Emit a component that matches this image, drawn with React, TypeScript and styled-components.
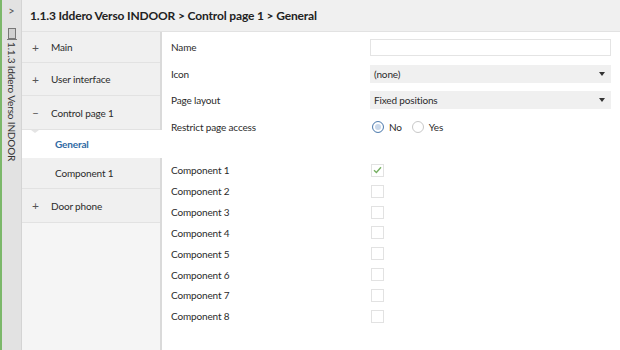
import styled, { createGlobalStyle } from "styled-components";

const GlobalStyle = createGlobalStyle`
  html, body {
    margin: 0;
    padding: 0;
    background: #ffffff;
  }
  body {
    font-family: Lato, "Open Sans", sans-serif;
    color: #2b2b2b;
  }
`;

const Window = styled.div`
  width: 620px;
  height: 350px;
  display: flex;
  overflow: hidden;
`;

const Rail = styled.div`
  width: 19px;
  border-left: 2px solid #7cb86a;
  border-right: 1px solid #d4d4d4;
  background-color: #e2e2e2;
  display: flex;
  flex-direction: column;
  align-items: center;
  padding-top: 4px;
`;

const Chevron = styled.div`
  font-size: 11px;
  color: #555;
  height: 22px;
  line-height: 14px;
`;

const RailLabel = styled.div`
  writing-mode: vertical-rl;
  font-size: 10px;
  letter-spacing: -0.15px;
  color: #333;
  display: flex;
  align-items: center;
  gap: 2px;
  margin-top: 2px;
`;

const Main = styled.div`
  flex: 1;
  display: flex;
  flex-direction: column;
`;

const Header = styled.div`
  height: 32px;
  box-sizing: border-box;
  background-color: #f0f0f0;
  border-bottom: 1px solid #e2e2e2;
  display: flex;
  align-items: center;
  padding-left: 8px;
  font-size: 12px;
  letter-spacing: -0.15px;
  font-weight: 700;
  color: #222;
`;

const Body = styled.div`
  flex: 1;
  display: flex;
`;

const Nav = styled.div`
  width: 138px;
  background-color: #f5f5f5;
  border-right: 2px solid #dadada;
  display: flex;
  flex-direction: column;
`;

const NavItem = styled.div<{ $height: number; $sub?: boolean; $active?: boolean }>`
  height: ${(p) => p.$height}px;
  box-sizing: border-box;
  display: flex;
  align-items: center;
  padding-left: ${(p) => (p.$sub ? 33 : 10)}px;
  font-size: 10px;
  letter-spacing: -0.15px;
  position: relative;
  background-color: ${(p) => (p.$active ? "#ffffff" : "#f0f0f0")};
  color: ${(p) => (p.$active ? "#2f6aa3" : "#2b2b2b")};
  font-weight: ${(p) => (p.$active ? 700 : 400)};
  border-bottom: ${(p) => (p.$sub ? "none" : "1px solid #e2e2e2")};
  margin-right: ${(p) => (p.$active ? "-2px" : "0")};
`;

const Sign = styled.span`
  width: 19px;
  font-size: 12px;
  color: #555;
`;

const Notch = styled.span`
  position: absolute;
  top: 0;
  left: 9px;
  width: 0;
  height: 0;
  border-left: 4px solid transparent;
  border-right: 4px solid transparent;
  border-top: 3px solid #e4e4e4;
`;

const Content = styled.div`
  flex: 1;
  background-color: #ffffff;
  padding: 2px 9px 0 9px;
  font-size: 10px;
  letter-spacing: -0.15px;
`;

const Form = styled.div`
  display: grid;
  grid-template-columns: 199px 241px;
  grid-auto-rows: 26.5px;
  align-items: center;
`;

const Label = styled.div`
  color: #2b2b2b;
`;

const TextBox = styled.div`
  height: 17px;
  box-sizing: border-box;
  border: 1px solid #e4e4e4;
  background-color: #fff;
`;

const Select = styled.div`
  height: 18px;
  box-sizing: border-box;
  background-color: #f0f0f0;
  display: flex;
  align-items: center;
  justify-content: space-between;
  padding: 0 6px 0 4px;
  color: #2b2b2b;
`;

const Arrow = styled.span`
  width: 0;
  height: 0;
  border-left: 3.5px solid transparent;
  border-right: 3.5px solid transparent;
  border-top: 4px solid #333;
`;

const RadioGroup = styled.div`
  display: flex;
  align-items: center;
  padding-left: 2px;
`;

const Radio = styled.span<{ $checked?: boolean }>`
  width: 12px;
  height: 12px;
  box-sizing: border-box;
  border-radius: 50%;
  border: 1px solid ${(p) => (p.$checked ? "#5580b0" : "#c8c8c8")};
  background-color: ${(p) => (p.$checked ? "#c9d8ea" : "#fff")};
  box-shadow: ${(p) => (p.$checked ? "inset 0 0 0 2px #fff" : "none")};
  margin-right: 5px;
`;

const RadioText = styled.span`
  margin-right: 10px;
`;

const Components = styled.div`
  display: grid;
  grid-template-columns: 199px 20px;
  grid-auto-rows: 20.85px;
  align-items: center;
  margin-top: 20px;
`;

const Check = styled.span`
  width: 13px;
  height: 13px;
  box-sizing: border-box;
  border: 1px solid #e2e2e2;
  display: flex;
  align-items: center;
  justify-content: center;
  margin-left: 1px;
`;

const components = [1, 2, 3, 4, 5, 6, 7, 8];

function App() {
  return (
    <>
      <GlobalStyle />
      <Window>
        <Rail>
          <Chevron>&gt;</Chevron>
          <RailLabel>
            <svg width="10" height="12" viewBox="0 0 10 12">
              <rect x="1.5" y="0.5" width="7" height="10" fill="#d0d0d0" stroke="#777" />
              <line x1="0" y1="11.5" x2="10" y2="11.5" stroke="#777" />
            </svg>
            1.1.3 Iddero Verso INDOOR
          </RailLabel>
        </Rail>
        <Main>
          <Header>1.1.3 Iddero Verso INDOOR &gt; Control page 1 &gt; General</Header>
          <Body>
            <Nav>
              <NavItem $height={31}>
                <Sign>+</Sign>Main
              </NavItem>
              <NavItem $height={33}>
                <Sign>+</Sign>User interface
              </NavItem>
              <NavItem $height={34}>
                <Sign>–</Sign>Control page 1
              </NavItem>
              <NavItem $height={28} $sub $active>
                <Notch />
                General
              </NavItem>
              <NavItem $height={30} $sub>
                Component 1
              </NavItem>
              <NavItem $height={35} style={{ borderTop: "1px solid #e2e2e2" }}>
                <Sign>+</Sign>Door phone
              </NavItem>
            </Nav>
            <Content>
              <Form>
                <Label>Name</Label>
                <TextBox />
                <Label>Icon</Label>
                <Select>
                  (none)
                  <Arrow />
                </Select>
                <Label>Page layout</Label>
                <Select>
                  Fixed positions
                  <Arrow />
                </Select>
                <Label>Restrict page access</Label>
                <RadioGroup>
                  <Radio $checked />
                  <RadioText>No</RadioText>
                  <Radio />
                  <RadioText>Yes</RadioText>
                </RadioGroup>
              </Form>
              <Components>
                {components.map((n) => (
                  <>
                    <Label key={"l" + n}>Component {n}</Label>
                    <Check key={"c" + n}>
                      {n === 1 && (
                        <svg width="9" height="8" viewBox="0 0 9 8">
                          <path d="M1 4.2 L3.4 6.5 L8 1.2" fill="none" stroke="#76b062" strokeWidth="1.4" />
                        </svg>
                      )}
                    </Check>
                  </>
                ))}
              </Components>
            </Content>
          </Body>
        </Main>
      </Window>
    </>
  );
}

export default App;
